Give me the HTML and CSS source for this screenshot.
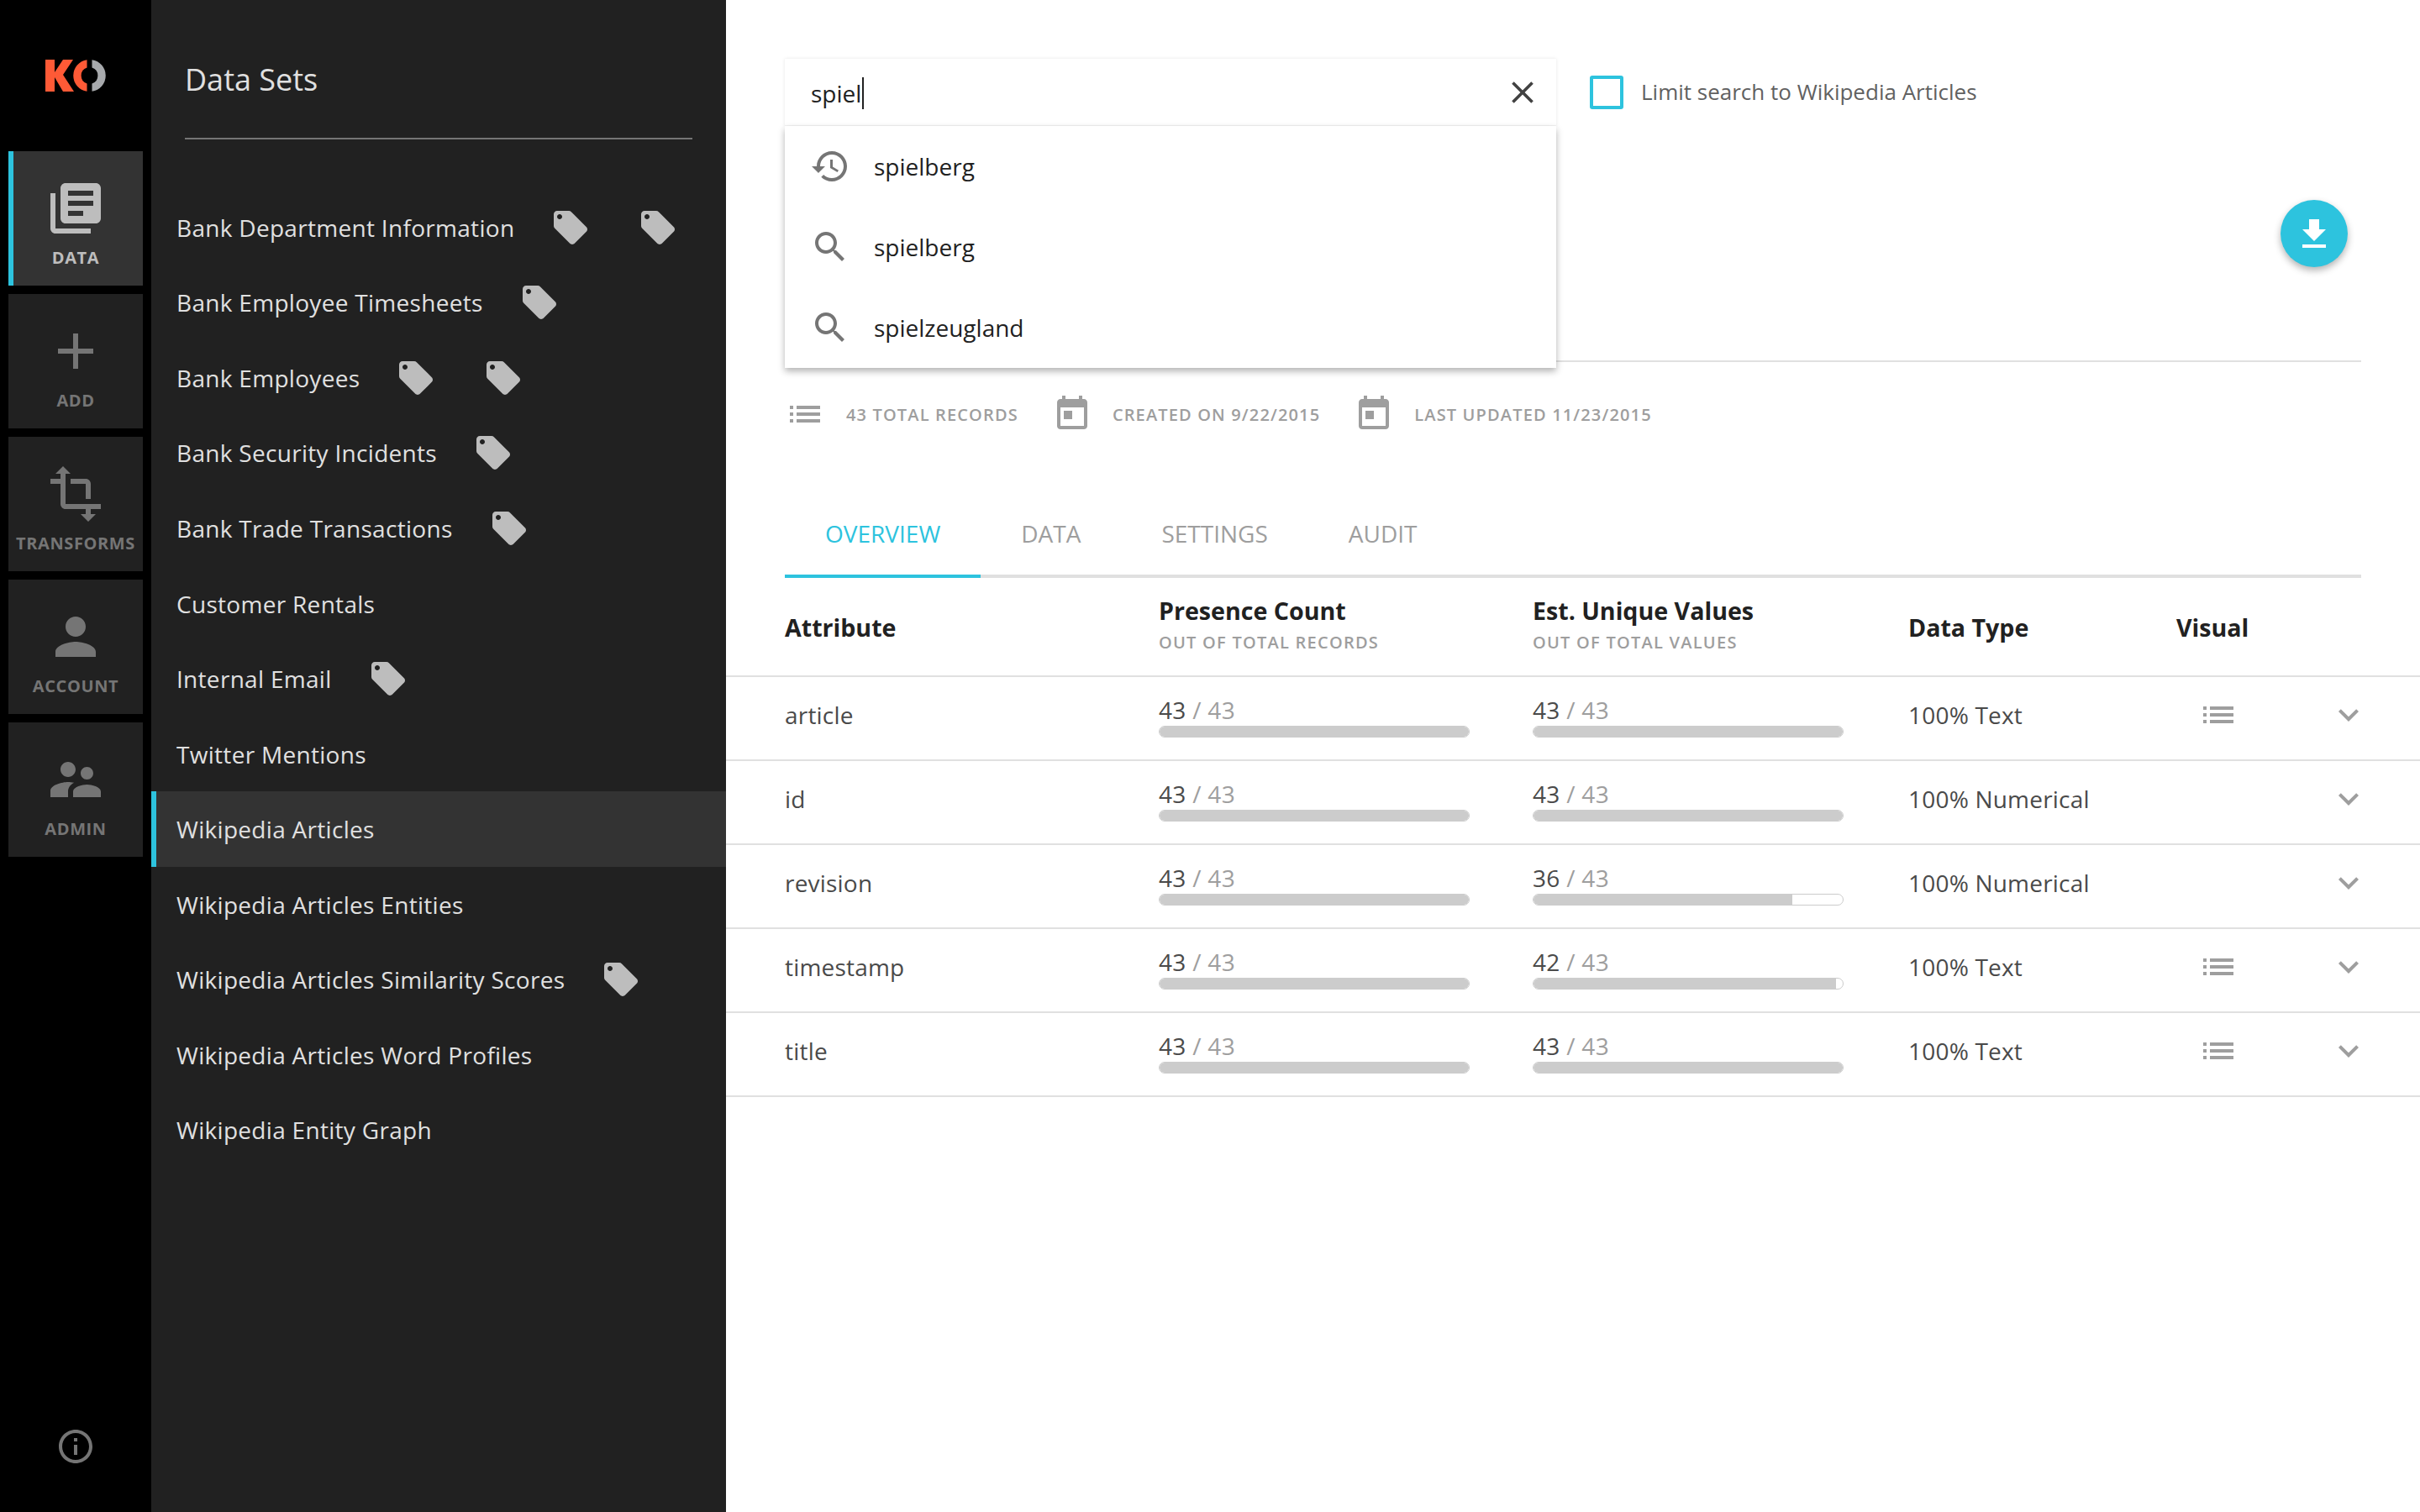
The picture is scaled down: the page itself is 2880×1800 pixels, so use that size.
FILE: index.html
```html
<!DOCTYPE html>
<html lang="en">
<head>
<meta charset="utf-8">
<title>Data Sets</title>
<link rel="stylesheet" href="styles.css">
</head>
<body>
<svg class="sprite" aria-hidden="true">
  <symbol id="i-books" viewBox="0 0 24 24"><path d="M4 6H2v14c0 1.1.9 2 2 2h14v-2H4V6zm16-4H8c-1.1 0-2 .9-2 2v12c0 1.1.9 2 2 2h12c1.1 0 2-.9 2-2V4c0-1.1-.9-2-2-2zm-1 9H9V9h10v2zm-4 4H9v-2h6v2zm4-8H9V5h10v2z"/></symbol>
  <symbol id="i-add" viewBox="0 0 24 24"><path d="M19 13h-6v6h-2v-6H5v-2h6V5h2v6h6v2z"/></symbol>
  <symbol id="i-transform" viewBox="0 0 24 24"><path d="M22 18v-2H8V4h2L7 1 4 4h2v2H2v2h4v8c0 1.1.9 2 2 2h8v2h-2l3 3 3-3h-2v-2h4zM10 8h6v6h2V8c0-1.1-.9-2-2-2h-6v2z"/></symbol>
  <symbol id="i-person" viewBox="0 0 24 24"><path d="M12 12c2.21 0 4-1.79 4-4s-1.79-4-4-4-4 1.79-4 4 1.79 4 4 4zm0 2c-2.67 0-8 1.34-8 4v2h16v-2c0-2.66-5.33-4-8-4z"/></symbol>
  <symbol id="i-admin" viewBox="0 0 24 24"><path d="M16.5 12c1.38 0 2.49-1.12 2.49-2.5S17.88 7 16.5 7C15.12 7 14 8.12 14 9.5s1.12 2.5 2.5 2.5zM9 11c1.66 0 2.99-1.34 2.99-3S10.66 5 9 5C7.34 5 6 6.34 6 8s1.34 3 3 3zm7.5 3c-1.83 0-5.5.92-5.5 2.75V19h11v-2.25c0-1.83-3.67-2.75-5.5-2.75zM9 13c-2.33 0-7 1.17-7 3.5V19h7v-2.25c0-.85.33-2.34 2.37-3.47C10.5 13.1 9.66 13 9 13z"/></symbol>
  <symbol id="i-info" viewBox="0 0 24 24"><path d="M11 17h2v-6h-2v6zm1-15C6.48 2 2 6.48 2 12s4.48 10 10 10 10-4.48 10-10S17.52 2 12 2zm0 18c-4.41 0-8-3.59-8-8s3.59-8 8-8 8 3.59 8 8-3.59 8-8 8zM11 9h2V7h-2v2z"/></symbol>
  <symbol id="i-tag" viewBox="2 2 20 20"><path d="M21.41 11.58l-9-9C12.05 2.22 11.55 2 11 2H4c-1.1 0-2 .9-2 2v7c0 .55.22 1.05.59 1.42l9 9c.36.36.86.58 1.41.58.55 0 1.05-.22 1.41-.59l7-7c.37-.36.59-.86.59-1.41 0-.55-.23-1.06-.59-1.42zM5.5 7C4.67 7 4 6.33 4 5.5S4.67 4 5.5 4 7 4.67 7 5.5 6.33 7 5.5 7z"/></symbol>
  <symbol id="i-close" viewBox="0 0 24 24"><path d="M19 6.41L17.59 5 12 10.59 6.41 5 5 6.41 10.59 12 5 17.59 6.41 19 12 13.41 17.59 19 19 17.59 13.41 12z"/></symbol>
  <symbol id="i-history" viewBox="0 0 24 24"><path d="M13 3c-4.97 0-9 4.03-9 9H1l3.89 3.89.07.14L9 12H6c0-3.87 3.13-7 7-7s7 3.13 7 7-3.13 7-7 7c-1.93 0-3.68-.79-4.94-2.06l-1.42 1.42C8.27 19.99 10.51 21 13 21c4.97 0 9-4.03 9-9s-4.03-9-9-9zm-1 5v5l4.28 2.54.72-1.21-3.5-2.08V8H12z"/></symbol>
  <symbol id="i-search" viewBox="0 0 24 24"><path d="M15.5 14h-.79l-.28-.27C15.41 12.59 16 11.11 16 9.5 16 5.91 13.09 3 9.5 3S3 5.91 3 9.5 5.91 16 9.5 16c1.61 0 3.09-.59 4.23-1.57l.27.28v.79l5 4.99L20.49 19l-4.99-5zm-6 0C7.01 14 5 11.99 5 9.5S7.01 5 9.5 5 14 7.01 14 9.5 11.99 14 9.5 14z"/></symbol>
  <symbol id="i-list" viewBox="0 0 24 24"><path d="M3 13h2v-2H3v2zm0 4h2v-2H3v2zm0-8h2V7H3v2zm4 4h14v-2H7v2zm0 4h14v-2H7v2zM7 7v2h14V7H7z"/></symbol>
  <symbol id="i-today" viewBox="0 0 24 24"><path d="M19 3h-1V1h-2v2H8V1H6v2H5c-1.11 0-1.99.9-1.99 2L3 19c0 1.1.89 2 2 2h14c1.1 0 2-.9 2-2V5c0-1.1-.9-2-2-2zm0 16H5V8h14v11zM7 10h5v5H7z"/></symbol>
  <symbol id="i-download" viewBox="0 0 24 24"><path d="M19 9h-4V3H9v6H5l7 7 7-7zM5 18v2h14v-2H5z"/></symbol>
  <symbol id="i-chevron" viewBox="0 0 24 24"><path d="M16.59 8.59L12 13.17 7.41 8.59 6 10l6 6 6-6z"/></symbol>
</svg>

<div class="app">
  <nav class="rail">
    <div class="logo">
      <svg viewBox="0 0 72 38" width="72" height="38">
        <path class="logo-o" d="M0 0h11v15L21 0h12L21 18l13 20H21L11 21v17H0z"/>
        <path class="logo-o" d="M49.5 .2A19 19 0 0 0 49.5 37.800V28.500A10 10 0 0 1 49.500 9.500Z"/>
        <path class="logo-g" d="M55.500 .2A19 19 0 0 1 55.500 37.800V28.500A10 10 0 0 0 55.500 9.500Z"/>
      </svg>
    </div>
    <a class="rail-item active"><svg class="rail-icon"><use href="#i-books"/></svg><span>DATA</span></a>
    <a class="rail-item"><svg class="rail-icon"><use href="#i-add"/></svg><span>ADD</span></a>
    <a class="rail-item"><svg class="rail-icon"><use href="#i-transform"/></svg><span>TRANSFORMS</span></a>
    <a class="rail-item"><svg class="rail-icon"><use href="#i-person"/></svg><span>ACCOUNT</span></a>
    <a class="rail-item"><svg class="rail-icon"><use href="#i-admin"/></svg><span>ADMIN</span></a>
    <svg class="info"><use href="#i-info"/></svg>
  </nav>

  <aside class="sets">
    <h1 class="sets-title">Data Sets</h1>
    <ul class="sets-list">
      <li><span>Bank Department Information</span><svg class="tag"><use href="#i-tag"/></svg><svg class="tag"><use href="#i-tag"/></svg></li>
      <li><span>Bank Employee Timesheets</span><svg class="tag"><use href="#i-tag"/></svg></li>
      <li><span>Bank Employees</span><svg class="tag"><use href="#i-tag"/></svg><svg class="tag"><use href="#i-tag"/></svg></li>
      <li><span>Bank Security Incidents</span><svg class="tag"><use href="#i-tag"/></svg></li>
      <li><span>Bank Trade Transactions</span><svg class="tag"><use href="#i-tag"/></svg></li>
      <li><span>Customer Rentals</span></li>
      <li><span>Internal Email</span><svg class="tag"><use href="#i-tag"/></svg></li>
      <li><span>Twitter Mentions</span></li>
      <li class="selected"><span>Wikipedia Articles</span></li>
      <li><span>Wikipedia Articles Entities</span></li>
      <li><span>Wikipedia Articles Similarity Scores</span><svg class="tag"><use href="#i-tag"/></svg></li>
      <li><span>Wikipedia Articles Word Profiles</span></li>
      <li><span>Wikipedia Entity Graph</span></li>
    </ul>
  </aside>

  <main class="main">
    <section class="head">
      <div class="search-row">
        <div class="search">
          <div class="search-input"><span class="typed">spiel</span><svg class="close"><use href="#i-close"/></svg></div>
          <ul class="suggest">
            <li><svg class="sug-icon"><use href="#i-history"/></svg>spielberg</li>
            <li><svg class="sug-icon"><use href="#i-search"/></svg>spielberg</li>
            <li><svg class="sug-icon"><use href="#i-search"/></svg>spielzeugland</li>
          </ul>
        </div>
        <label class="limit"><span class="check"></span><span class="limit-text">Limit search to Wikipedia Articles</span></label>
      </div>
      <button class="fab"><svg><use href="#i-download"/></svg></button>
    </section>

    <div class="meta">
      <svg class="meta-icon"><use href="#i-list"/></svg><span class="meta-text">43 TOTAL RECORDS</span>
      <svg class="meta-icon"><use href="#i-today"/></svg><span class="meta-text">CREATED ON 9/22/2015</span>
      <svg class="meta-icon"><use href="#i-today"/></svg><span class="meta-text">LAST UPDATED 11/23/2015</span>
    </div>

    <div class="tabs">
      <a class="tab on">OVERVIEW</a><a class="tab">DATA</a><a class="tab">SETTINGS</a><a class="tab">AUDIT</a>
    </div>

    <div class="row thead">
      <div class="th">Attribute</div>
      <div class="th-group"><div class="th">Presence Count</div><div class="sub">OUT OF TOTAL RECORDS</div></div>
      <div class="th-group"><div class="th">Est. Unique Values</div><div class="sub">OUT OF TOTAL VALUES</div></div>
      <div class="th">Data Type</div>
      <div class="th">Visual</div>
    </div>

    <div class="row">
      <div>article</div>
      <div class="cnt"><div class="num"><b>43</b> / 43</div><div class="bar"><i style="width:100%"></i></div></div>
      <div class="cnt"><div class="num"><b>43</b> / 43</div><div class="bar"><i style="width:100%"></i></div></div>
      <div>100% Text</div>
      <svg class="vis"><use href="#i-list"/></svg>
      <svg class="chev"><use href="#i-chevron"/></svg>
    </div>
    <div class="row">
      <div>id</div>
      <div class="cnt"><div class="num"><b>43</b> / 43</div><div class="bar"><i style="width:100%"></i></div></div>
      <div class="cnt"><div class="num"><b>43</b> / 43</div><div class="bar"><i style="width:100%"></i></div></div>
      <div>100% Numerical</div>
      <span></span>
      <svg class="chev"><use href="#i-chevron"/></svg>
    </div>
    <div class="row">
      <div>revision</div>
      <div class="cnt"><div class="num"><b>43</b> / 43</div><div class="bar"><i style="width:100%"></i></div></div>
      <div class="cnt"><div class="num"><b>36</b> / 43</div><div class="bar"><i style="width:83.7%"></i></div></div>
      <div>100% Numerical</div>
      <span></span>
      <svg class="chev"><use href="#i-chevron"/></svg>
    </div>
    <div class="row">
      <div>timestamp</div>
      <div class="cnt"><div class="num"><b>43</b> / 43</div><div class="bar"><i style="width:100%"></i></div></div>
      <div class="cnt"><div class="num"><b>42</b> / 43</div><div class="bar"><i style="width:97.7%"></i></div></div>
      <div>100% Text</div>
      <svg class="vis"><use href="#i-list"/></svg>
      <svg class="chev"><use href="#i-chevron"/></svg>
    </div>
    <div class="row">
      <div>title</div>
      <div class="cnt"><div class="num"><b>43</b> / 43</div><div class="bar"><i style="width:100%"></i></div></div>
      <div class="cnt"><div class="num"><b>43</b> / 43</div><div class="bar"><i style="width:100%"></i></div></div>
      <div>100% Text</div>
      <svg class="vis"><use href="#i-list"/></svg>
      <svg class="chev"><use href="#i-chevron"/></svg>
    </div>
  </main>
</div>
</body>
</html>
```
FILE: styles.css
```css
* { box-sizing: border-box; }
html, body { margin: 0; height: 100%; }
body { font-family: "Open Sans", "Liberation Sans", sans-serif; background: #fff; overflow: hidden; }
.sprite { display: none; }
svg { fill: currentColor; display: block; }
ul { list-style: none; margin: 0; padding: 0; }

.app { display: flex; width: 2880px; height: 1800px; }

/* left rail */
.rail { width: 180px; flex: none; background: #000; padding: 0 10px; display: flex; flex-direction: column; gap: 10px; }
.logo { height: 170px; padding: 71px 0 0 44px; color: #ff5a36; }
.logo-o { fill: #ff5a36; }
.logo-g { fill: #a7a9ac; }
.rail-item { height: 160px; background: #212121; color: #757575; display: flex; flex-direction: column; align-items: center; padding-top: 32px; font-size: 20px; font-weight: 700; letter-spacing: .6px; line-height: 28px; }
.rail-item span { margin-top: 9px; white-space: nowrap; }
.rail-icon { width: 72px; height: 72px; }
.rail-item.active { background: #333; color: #bdbdbd; border-left: 6px solid #2dc3de; padding-right: 6px; }
.info { width: 48px; height: 48px; color: #757575; margin: auto 0 54px 56px; }

/* data sets */
.sets { width: 684px; flex: none; background: #212121; color: #e0e0e0; }
.sets-title { margin: 0 40px; height: 166px; padding-top: 68px; border-bottom: 2px solid #757575; font-size: 36px; font-weight: 400; line-height: 54px; }
.sets-list { padding-top: 60px; }
.sets-list li { height: 89.55px; padding-left: 30px; display: flex; align-items: center; font-size: 28px; letter-spacing: .3px; }
.sets-list li.selected { background: #333; border-left: 6px solid #2dc3de; padding-left: 24px; }
.tag { width: 40px; height: 40px; color: #bdbdbd; margin-left: 47px; }
.tag + .tag { margin-left: 64px; }

/* main */
.main { flex: 1; min-width: 0; }
.head { height: 431px; margin: 0 70px; border-bottom: 2px solid #e0e0e0; position: relative; padding-top: 70px; }
.search-row { display: flex; align-items: flex-start; gap: 40px; }
.search { width: 918px; position: relative; flex: none; }
.search-input { height: 80px; display: flex; align-items: center; justify-content: space-between; padding: 2px 18px 0 31px; font-size: 28px; color: #212121; background: #fff; box-shadow: 0 0 4px rgba(0,0,0,.1); border-bottom: 1px solid #f2f2f2; }
.typed { border-right: 2px solid #212121; line-height: 38px; padding-right: 1px; }
.close { width: 44px; height: 44px; color: #424242; margin-top: -2px; }
.suggest { position: absolute; left: 0; right: 0; top: 80px; background: #fff; box-shadow: 0 4px 8px rgba(0,0,0,.3); z-index: 2; }
.suggest li { height: 96px; display: flex; align-items: center; padding-left: 30px; gap: 28px; font-size: 28px; color: #212121; }
.sug-icon { width: 48px; height: 48px; color: #757575; }
.limit { display: flex; align-items: center; gap: 21px; margin-top: 20px; font-size: 26px; color: #616161; }
.limit-text { padding-bottom: 3px; }
.check { width: 40px; height: 40px; border: 4px solid #2dc3de; border-radius: 3px; }
.fab { position: absolute; right: 16px; top: 238px; width: 80px; height: 80px; border: 0; border-radius: 50%; background: #2dc3de; color: #fff; padding: 17px 16px 15px; box-shadow: 0 4px 8px rgba(0,0,0,.3); }
.fab svg { width: 48px; height: 48px; }

.meta { margin: 38px 70px 0; height: 48px; display: flex; align-items: center; font-size: 20px; font-weight: 600; letter-spacing: 1.15px; color: #9e9e9e; }
.meta-icon { width: 48px; height: 48px; margin-right: 24px; flex: none; }
.meta-icon:first-child { margin-right: 25px; }
.meta-text { margin-right: 40px; padding-top: 1px; }

.tabs { margin: 86px 70px 0; height: 85px; display: flex; border-bottom: 4px solid #e0e0e0; font-size: 28px; color: #9e9e9e; }
.tab { padding: 0 48px; height: 85px; line-height: 64px; }
.tab.on { color: #2dc3de; border-bottom: 4px solid #2dc3de; }

.row { display: grid; grid-template-columns: 445px 445px 447px 319px 1fr 40px; align-items: center; height: 100px; padding: 0 69px 8px 70px; border-bottom: 2px solid #e0e0e0; font-size: 28px; letter-spacing: .2px; color: #4a4a4a; }
.thead { grid-template-columns: 445px 445px 447px 319px 1fr; height: 118px; padding-bottom: 0; letter-spacing: 0; }
.th { font-weight: 700; font-size: 28.6px; color: #212121; }
.th-group { padding-bottom: 7px; }
.sub { font-size: 20px; font-weight: 600; letter-spacing: 1.25px; color: #9e9e9e; margin-top: 5px; }
.cnt { width: 370px; margin-top: 5px; }
.num { font-size: 28px; letter-spacing: .3px; line-height: 30px; color: #9e9e9e; }
.num b { font-weight: 400; color: #4a4a4a; }
.bar { height: 14px; margin-top: 4px; border: 1px solid #ccc; border-radius: 7px; overflow: hidden; }
.bar i { display: block; height: 100%; background: #ccc; }
.vis { width: 48px; height: 48px; color: #9e9e9e; margin-left: 26px; }
.chev { width: 48px; height: 48px; color: #9e9e9e; }
```
